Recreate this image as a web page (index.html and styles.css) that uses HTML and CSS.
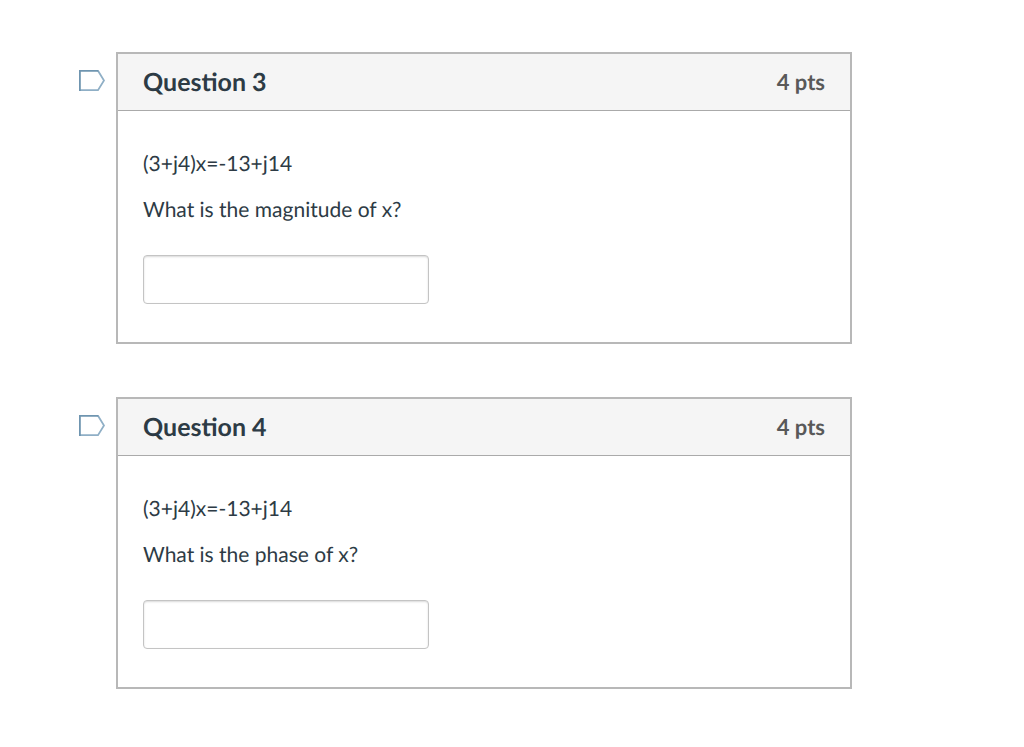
FILE: index.html
```
<!DOCTYPE html>
<html lang="en">
<head>
<meta charset="UTF-8" />
<meta name="viewport" content="width=device-width, initial-scale=1.0" />
<title>Quiz</title>
<link rel="stylesheet" href="styles.css">
</head>
<body>
<main class="quiz">
  <section class="question-row">
    <button type="button" class="flag" aria-label="Flag question 3">
      <svg viewBox="0 0 26 22" width="26" height="22"><path class="tip" d="M19 0.8L25 10.5L19 20.2H1" /><path class="back" d="M0.9 21V0.9H19.5" /></svg>
    </button>
    <div class="question">
      <header class="question-header">
        <h2>Question 3</h2>
        <span class="points">4 pts</span>
      </header>
      <div class="question-body">
        <p>(3+j4)x=-13+j14</p>
        <p id="q3-text">What is the magnitude of x?</p>
        <input type="text" class="answer" aria-labelledby="q3-text" autocomplete="off" />
      </div>
    </div>
  </section>

  <section class="question-row">
    <button type="button" class="flag" aria-label="Flag question 4">
      <svg viewBox="0 0 26 22" width="26" height="22"><path class="tip" d="M19 0.8L25 10.5L19 20.2H1" /><path class="back" d="M0.9 21V0.9H19.5" /></svg>
    </button>
    <div class="question">
      <header class="question-header">
        <h2>Question 4</h2>
        <span class="points">4 pts</span>
      </header>
      <div class="question-body">
        <p>(3+j4)x=-13+j14</p>
        <p id="q4-text">What is the phase of x?</p>
        <input type="text" class="answer" aria-labelledby="q4-text" autocomplete="off" />
      </div>
    </div>
  </section>
</main>
</body>
</html>
```
FILE: styles.css
```
* {
  box-sizing: border-box;
}
body {
  margin: 0;
  background: #fff;
  color: #2d3b45;
  font-family: Lato, "Liberation Sans", sans-serif;
  font-size: 21px;
  line-height: 32px;
  text-rendering: geometricPrecision;
  -webkit-font-smoothing: antialiased;
}
.quiz {
  padding: 52px 172px 52px 79px;
}
.question-row {
  display: flex;
  align-items: flex-start;
  gap: 11px;
  margin-bottom: 53px;
}
.question-row:last-child {
  margin-bottom: 0;
}

/* Flag marker */
.flag {
  display: block;
  flex: none;
  margin: 18px 0 0;
  padding: 0;
  border: none;
  background: none;
  cursor: pointer;
}
.flag svg {
  display: block;
  fill: none;
  stroke-width: 1.8;
}
.flag .back {
  stroke: #6f95b0;
}
.flag .tip {
  stroke: #8fafc6;
}

/* Question card */
.question {
  flex: 1;
  border: 2px solid #b8b8b8;
}
.question-header {
  display: flex;
  justify-content: space-between;
  align-items: center;
  height: 57px;
  padding: 0 25px;
  background: #f5f5f5;
  border-bottom: 1px solid #aaa;
}
.question-header h2 {
  margin: 0;
  font-size: 25px;
  font-weight: 700;
}
.points {
  color: #595959;
  font-size: 22px;
  font-weight: 700;
}
.question-body {
  padding: 37px 25px 38px;
}
.question-body p {
  margin: 0 0 14px;
}
.answer {
  display: block;
  width: 286px;
  max-width: 100%;
  height: 49px;
  margin-top: 29px;
  padding: 4px 10px;
  border: 1px solid #c4c4c4;
  border-radius: 4px;
  box-shadow: inset 0 1px 2px rgba(0, 0, 0, 0.15);
  color: inherit;
  font: inherit;
}
```
